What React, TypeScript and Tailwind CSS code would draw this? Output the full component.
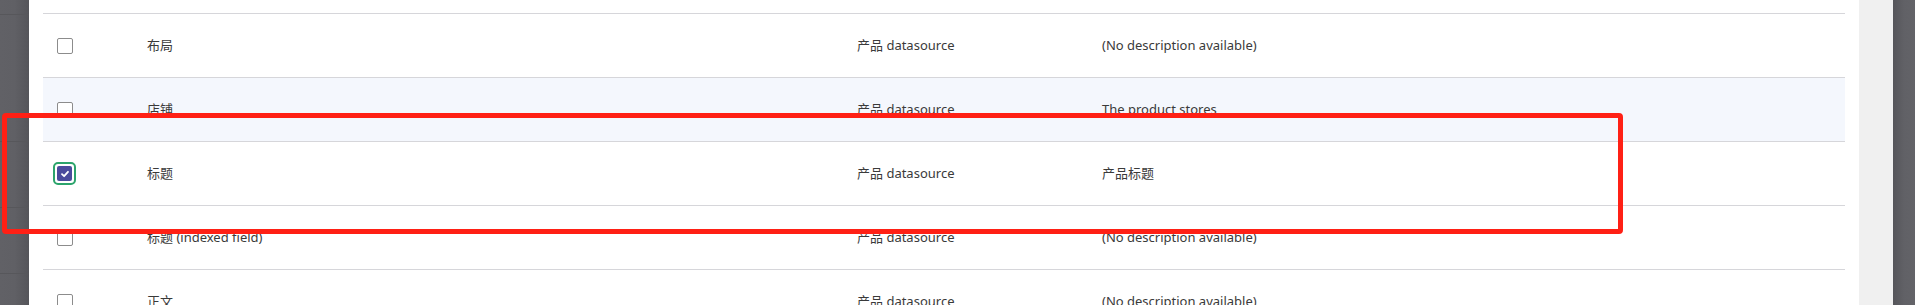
import React from "react";

// ── Data ──────────────────────────────────────────────────────────────────────

interface FieldRow {
  name: string;
  source: string;
  description: string;
  checked?: boolean;
  highlighted?: boolean;
}

const ROWS: FieldRow[] = [
  { name: "布局", source: "产品 datasource", description: "(No description available)" },
  { name: "店铺", source: "产品 datasource", description: "The product stores", highlighted: true },
  { name: "标题", source: "产品 datasource", description: "产品标题", checked: true },
  { name: "标题 (indexed field)", source: "产品 datasource", description: "(No description available)" },
  { name: "正文", source: "产品 datasource", description: "(No description available)" },
];

// ── Checkbox ──────────────────────────────────────────────────────────────────

function Checkbox({ checked }: { checked?: boolean }) {
  if (checked) {
    // focused + checked: green focus ring around an indigo box
    return (
      <span className="-ml-[4px] flex h-[23px] w-[23px] items-center justify-center rounded-[5px] border-[2.5px] border-[#2ca46c]">
        <span className="flex h-[15px] w-[15px] items-center justify-center rounded-[2px] bg-[#4a4b9c]">
          <svg width="10" height="10" viewBox="0 0 10 10" fill="none">
            <path d="M2 5.2 L4.1 7.2 L8 2.8" stroke="white" strokeWidth="1.8" strokeLinecap="round" strokeLinejoin="round" />
          </svg>
        </span>
      </span>
    );
  }
  return <span className="block h-[16px] w-[16px] rounded-[2px] border border-[#8c8c8c] bg-white" />;
}

// ── Row ───────────────────────────────────────────────────────────────────────

function Row({ row }: { row: FieldRow }) {
  return (
    <div
      className={`grid h-[64px] shrink-0 grid-cols-[104px_710px_245px_1fr] items-center border-t border-[#d6d6da] ${
        row.highlighted ? "bg-[#f4f7fd]" : "bg-white"
      }`}
    >
      <div className="flex items-center pl-[14px]">
        <Checkbox checked={row.checked} />
      </div>
      <div>{row.name}</div>
      <div>{row.source}</div>
      <div>{row.description}</div>
    </div>
  );
}

// ── Main ──────────────────────────────────────────────────────────────────────

export default function App() {
  return (
    <div
      className="relative flex h-[305px] w-[1915px] overflow-hidden bg-white text-[13px] text-[#3a3a3a]"
      style={{ fontFamily: '"Noto Sans", "Noto Sans CJK SC", sans-serif' }}
    >
      {/* Dimmed page on the left */}
      <div className="flex w-[29px] shrink-0 flex-col bg-gradient-to-r from-[#616166] via-[#606065] to-[#55555a]">
        <div className="h-[15px] border-b border-[#57575b]" />
        <div className="h-[127px] border-b border-[#57575b]" />
        <div className="h-[66px] border-b border-[#57575b]" />
        <div className="h-[66px] border-b border-[#57575b]" />
      </div>

      {/* Panel */}
      <div className="flex flex-1 flex-col px-[14px]">
        <div className="h-[13px] shrink-0" />
        {ROWS.map((row, i) => (
          <Row key={i} row={row} />
        ))}
      </div>

      {/* Scrollbar track */}
      <div className="w-[34px] shrink-0 bg-[#f0f0f0]" />
      {/* Dimmed page on the right */}
      <div className="w-[22px] shrink-0 bg-gradient-to-r from-[#55555a] via-[#616166] to-[#636368]" />

      {/* Annotation */}
      <div className="pointer-events-none absolute left-[2px] top-[113px] h-[121px] w-[1621px] rounded-[4px] border-[5px] border-[#ff2015]" />
    </div>
  );
}
